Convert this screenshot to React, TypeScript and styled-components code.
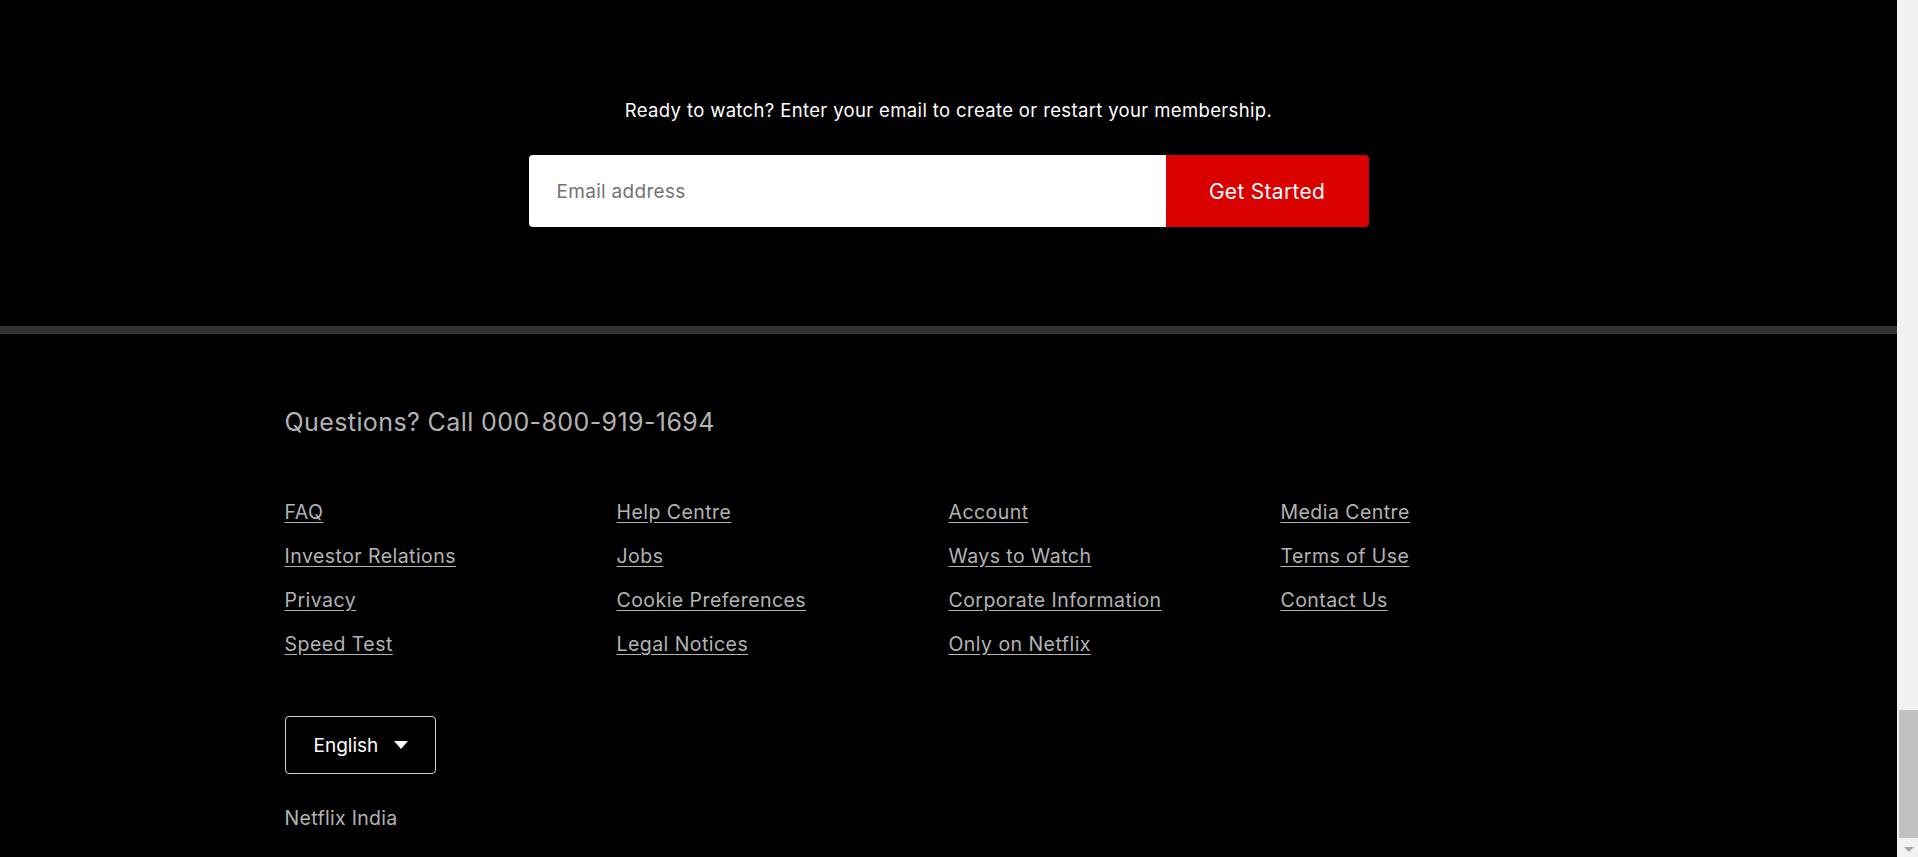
import { createGlobalStyle, styled } from "styled-components";

const GlobalStyle = createGlobalStyle`
    body {
        margin: 0;
        background-color: #000;
        font-family: Inter, "Noto Sans", sans-serif;
        color: #fff;
    }
`;

const Page = styled.div`
    display: flex;
    min-height: 857px;
`;

const Main = styled.main`
    flex: 1;
    min-width: 0;
`;

// browser scrollbar, page scrolled to the bottom
const ScrollTrack = styled.div`
    width: 21px;
    flex-shrink: 0;
    display: flex;
    flex-direction: column;
    justify-content: flex-end;
    align-items: center;
    background-color: #f1f1f1;
    padding-bottom: 5px;
    box-sizing: border-box;
`;

const ScrollThumb = styled.div`
    align-self: flex-end;
    width: 19px;
    height: 128px;
    background-color: #c1c1c1;
    margin-bottom: 9px;
`;

const ScrollArrow = styled.div`
    width: 0;
    height: 0;
    margin-left: 2px;
    border-left: 5px solid transparent;
    border-right: 5px solid transparent;
    border-top: 5px solid #a3a3a3;
`;

const Hero = styled.section`
    display: flex;
    flex-direction: column;
    align-items: center;
    padding: 97px 0 99px;
`;

const Lead = styled.h3`
    margin: 0 0 32px;
    font-size: 18.5px;
    letter-spacing: 0.35px;
    font-weight: 400;
    line-height: 26px;
    color: #fff;
`;

const EmailForm = styled.form`
    display: flex;
    width: 840px;
    height: 72px;
`;

const EmailInput = styled.input`
    flex: 1;
    border: none;
    border-radius: 4px 0 0 4px;
    padding: 0 28px;
    font-size: 19px;
    letter-spacing: 0.3px;
    font-family: inherit;
    color: #000;
    background-color: #fff;
    &::placeholder {
        color: #737373;
    }
    &:focus {
        outline: none;
    }
`;

const StartBtn = styled.button`
    width: 203px;
    border: none;
    border-radius: 0 4px 4px 0;
    background-color: #db0000;
    color: #fff;
    font-size: 21px;
    letter-spacing: 0.3px;
    font-family: inherit;
    cursor: pointer;
`;

const Divider = styled.div`
    height: 8px;
    background-color: #333;
`;

const Footer = styled.footer`
    width: 70%;
    margin: 0 auto;
    padding-top: 72px;
    color: #b3b3b3;
`;

const Questions = styled.p`
    margin: 0 0 60px;
    font-size: 25px;
    letter-spacing: 0.4px;
    line-height: 32px;
`;

const LinkGrid = styled.ul`
    list-style: none;
    margin: 0;
    padding: 0;
    display: grid;
    grid-template-columns: repeat(4, 1fr);
    row-gap: 16px;
`;

const FooterLink = styled.a`
    font-size: 19.5px;
    letter-spacing: 0.45px;
    line-height: 28px;
    color: #b3b3b3;
    text-decoration: underline;
    text-underline-offset: 3px;
    cursor: pointer;
`;

const LangBtn = styled.button`
    display: flex;
    align-items: center;
    gap: 16px;
    margin-top: 58px;
    width: 151px;
    height: 58px;
    padding: 0 0 0 28px;
    border: 1px solid #d0d0d0;
    border-radius: 4px;
    background: transparent;
    color: #fff;
    font-size: 19px;
    font-family: inherit;
    cursor: pointer;
`;

const Caret = styled.span`
    width: 0;
    height: 0;
    border-left: 7px solid transparent;
    border-right: 7px solid transparent;
    border-top: 8px solid #fff;
`;

const Country = styled.p`
    margin: 32px 0 0;
    font-size: 19.5px;
    letter-spacing: 0.3px;
    line-height: 24px;
`;

// laid out row by row, four per row
const links = [
    "FAQ", "Help Centre", "Account", "Media Centre",
    "Investor Relations", "Jobs", "Ways to Watch", "Terms of Use",
    "Privacy", "Cookie Preferences", "Corporate Information", "Contact Us",
    "Speed Test", "Legal Notices", "Only on Netflix",
];

export default function App() {
    return <>
        <GlobalStyle />
        <Page>
            <Main>
                <Hero>
                    <Lead>Ready to watch? Enter your email to create or restart your membership.</Lead>
                    <EmailForm onSubmit={(e) => e.preventDefault()}>
                        <EmailInput type="email" placeholder="Email address" />
                        <StartBtn type="submit">Get Started</StartBtn>
                    </EmailForm>
                </Hero>
                <Divider />
                <Footer>
                    <Questions>Questions? Call 000-800-919-1694</Questions>
                    <LinkGrid>
                        {links.map((l) => <li key={l}><FooterLink>{l}</FooterLink></li>)}
                    </LinkGrid>
                    <LangBtn>English <Caret /></LangBtn>
                    <Country>Netflix India</Country>
                </Footer>
            </Main>
            <ScrollTrack>
                <ScrollThumb />
                <ScrollArrow />
            </ScrollTrack>
        </Page>
    </>
}
